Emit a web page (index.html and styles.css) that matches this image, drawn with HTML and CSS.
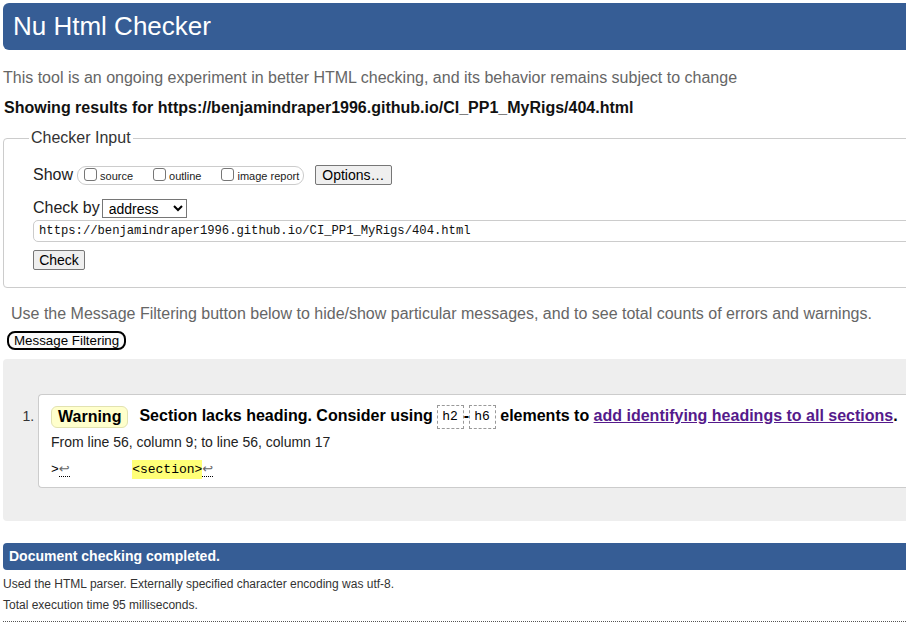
FILE: index.html
```html
<!DOCTYPE html>
<html lang="en">
<head>
<meta charset="utf-8">
<title>Showing results for https://benjamindraper1996.github.io/CI_PP1_MyRigs/404.html - Nu Html Checker</title>
<link rel="stylesheet" href="styles.css">
</head>
<body>
<div class="page">
  <h1 class="masthead">Nu Html Checker</h1>
  <p class="intro">This tool is an ongoing experiment in better HTML checking, and its behavior remains subject to change</p>
  <p class="results-for">Showing results for https://benjamindraper1996.github.io/CI_PP1_MyRigs/404.html</p>

  <fieldset class="checker">
    <legend>Checker Input</legend>
    <div class="row show-row">
      <span class="row-label">Show</span>
      <span class="opts">
        <label class="opt"><span class="cb"></span>source</label>
        <label class="opt"><span class="cb"></span>outline</label>
        <label class="opt"><span class="cb"></span>image report</label>
      </span>
      <button class="btn options-btn" type="button">Options…</button>
    </div>
    <div class="row by-row">
      <span class="row-label">Check by</span>
      <select class="by-select"><option>address</option></select>
    </div>
    <div class="url-field">https://benjamindraper1996.github.io/CI_PP1_MyRigs/404.html</div>
    <button class="btn check-btn" type="button">Check</button>
  </fieldset>

  <p class="filter-note">Use the Message Filtering button below to hide/show particular messages, and to see total counts of errors and warnings.</p>
  <button class="filter-btn" type="button">Message Filtering</button>

  <div class="results">
    <ol class="messages">
      <li class="message">
        <p class="msg-line"><strong class="badge">Warning</strong><span class="msg-text">Section lacks heading. Consider using <code class="el">h2</code>-<code class="el">h6</code> elements to <a class="msg-link" href="#">add identifying headings to all sections</a>.</span></p>
        <p class="location">From line 56, column 9; to line 56, column 17</p>
        <p class="extract"><code class="extract-code">&gt;<span class="lf">↩</span>        <b class="hl">&lt;section&gt;</b><span class="lf">↩</span></code></p>
      </li>
    </ol>
  </div>

  <h2 class="done">Document checking completed.</h2>
  <p class="stats">Used the HTML parser. Externally specified character encoding was utf-8.</p>
  <p class="stats">Total execution time 95 milliseconds.</p>
  <div class="dots"></div>
</div>
</body>
</html>
```

FILE: styles.css
```css
html, body {
  margin: 0;
  padding: 0;
  overflow: hidden;
}

body {
  font-family: Arial, "Liberation Sans", sans-serif;
  color: #000;
  background: #fff;
}

.page {
  width: 940px;
}

.masthead {
  margin: 3px 0 0 3px;
  height: 47px;
  box-sizing: border-box;
  padding-left: 10px;
  background: #365d95;
  color: #fff;
  font-size: 26px;
  font-weight: normal;
  line-height: 46px;
  border-radius: 6px 0 0 6px;
}

.intro {
  margin: 18px 0 0 3px;
  font-size: 16px;
  line-height: 20px;
  color: #666;
}

.results-for {
  margin: 10px 0 0 4px;
  font-size: 16px;
  line-height: 20px;
  font-weight: bold;
  color: #111;
}

.checker {
  margin: 11px 0 0 3px;
  padding: 0 0 17px 29px;
  border: 1px solid #ccc;
  border-radius: 4px;
  min-width: 0;
}

.checker legend {
  padding: 0 2px;
  margin-left: -4px;
  font-size: 16px;
  line-height: 18px;
  color: #333;
}

.row {
  display: flex;
  align-items: center;
}

.row-label {
  font-size: 16px;
  color: #222;
}

.show-row {
  margin-top: 16px;
  height: 24px;
}

.opts {
  display: flex;
  align-items: center;
  height: 17px;
  margin-left: 4px;
  padding: 0 4px 0 6px;
  border: 1px solid #ccc;
  border-radius: 9px;
}

.opt {
  display: flex;
  align-items: center;
  font-size: 11px;
  color: #222;
  margin-right: 20px;
  padding-top: 1px;
}

.opt:last-child {
  margin-right: 0;
}

.cb {
  width: 11px;
  height: 11px;
  border: 1px solid #767676;
  border-radius: 3px;
  background: #fff;
  margin-right: 3px;
  margin-top: -3px;
}

.btn {
  font-family: Arial, "Liberation Sans", sans-serif;
  font-size: 14px;
  color: #000;
  background: #efefef;
  border: 1px solid #767676;
  border-radius: 2px;
  padding: 0 6px;
  height: 20px;
  line-height: 18px;
}

.options-btn {
  margin-left: 11px;
  height: 20px;
}

.by-row {
  margin-top: 11px;
  height: 20px;
}

.by-select {
  margin-left: 2px;
  width: 85px;
  height: 19px;
  font-family: Arial, "Liberation Sans", sans-serif;
  font-size: 14px;
  color: #000;
  border: 1px solid #767676;
  border-radius: 0;
  background: #fff;
  padding: 0 2px;
}

.url-field {
  margin-top: 2px;
  height: 20px;
  border: 1px solid #ccc;
  border-radius: 5px;
  padding-left: 5px;
  font-family: "Liberation Mono", "DejaVu Sans Mono", monospace;
  font-size: 12.2px;
  line-height: 21px;
  color: #111;
}

.check-btn {
  display: block;
  margin-top: 8px;
  width: 52px;
  padding: 0;
}

.filter-note {
  margin: 16px 0 0 11px;
  font-size: 16px;
  line-height: 20px;
  color: #666;
}

.filter-btn {
  display: block;
  margin: 7px 0 0 7px;
  height: 19px;
  padding: 0 5px;
  border: 2px solid #000;
  border-radius: 8px;
  background: #fafafa;
  font-family: Arial, "Liberation Sans", sans-serif;
  font-size: 13.33px;
  line-height: 15px;
  color: #000;
}

.results {
  margin: 9px 0 0 3px;
  padding: 35px 0 33px 0;
  background: #eee;
  border-radius: 4px 0 0 4px;
}

.messages {
  margin: 0;
  padding-left: 35px;
  font-size: 14px;
  color: #333;
}

.message {
  background: #fff;
  border: 1px solid #ccc;
  border-right: 0;
  border-radius: 4px 0 0 4px;
  padding: 9px 0 7px 12px;
}

.message p {
  margin: 0;
}

.msg-line {
  font-size: 16px;
  line-height: 24px;
  color: #000;
}

.badge {
  display: inline-block;
  padding: 0 6px;
  line-height: 20px;
  border: 1px solid #e2e2b0;
  border-radius: 6px;
  background: #ffffcc;
  margin-right: 11px;
  font-weight: bold;
  vertical-align: middle;
}

.msg-text {
  font-weight: bold;
}

.el {
  display: inline-block;
  font-family: "Liberation Mono", "DejaVu Sans Mono", monospace;
  font-size: 13px;
  font-weight: normal;
  line-height: 22px;
  padding: 0 5px 0 4px;
  border: 1px dashed #999;
  color: #000;
  vertical-align: middle;
}

.msg-link {
  color: #551a8b;
  text-decoration: underline;
}

.location {
  margin-top: 3px !important;
  font-size: 14px;
  line-height: 20px;
  color: #222;
}

.extract {
  margin-top: 6px !important;
  line-height: 20px;
}

.extract-code {
  font-family: "Liberation Mono", "DejaVu Sans Mono", monospace;
  font-size: 13px;
  white-space: pre;
  color: #000;
}

.lf {
  font-family: "DejaVu Sans", sans-serif;
  font-size: 13px;
  border-bottom: 1px dotted #000;
  color: #666;
}

.hl {
  font-weight: normal;
  background: #ffff77;
  padding: 2px 0;
}

.done {
  margin: 22px 0 0 3px;
  height: 27px;
  padding-left: 6px;
  background: #365d95;
  color: #fff;
  font-size: 14px;
  font-weight: bold;
  line-height: 27px;
  border-radius: 4px 0 0 4px;
}

.stats {
  margin: 7px 0 0 3px;
  font-size: 12px;
  line-height: 14px;
  color: #333;
}

.dots {
  margin: 9px 0 0 3px;
  border-top: 1px dotted #555;
}
```
